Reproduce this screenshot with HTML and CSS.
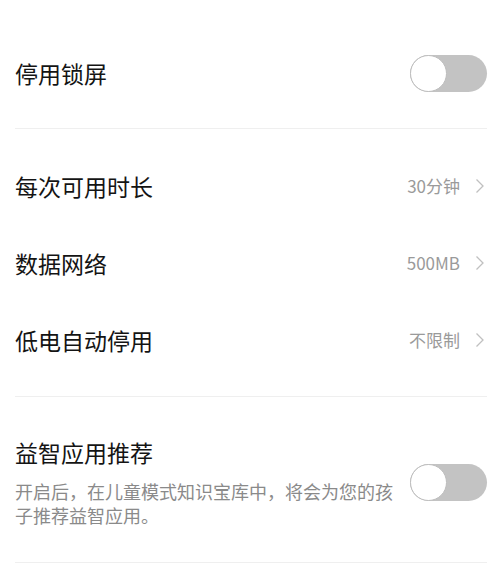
FILE: index.html
```html
<!DOCTYPE html>
<html lang="zh-CN">
<head>
    <meta charset="UTF-8">
    <meta name="viewport" content="width=device-width, initial-scale=1.0">
    <title>儿童模式设置</title>
    <link rel="stylesheet" href="styles.css">
</head>
<body>

    <div class="group group-top">
        <div class="row row-lock">
            <span class="label">停用锁屏</span>
            <div class="switch"><div class="knob"></div></div>
        </div>
    </div>

    <div class="group group-list">
        <div class="row">
            <span class="label">每次可用时长</span>
            <span class="value">30分钟
                <svg class="arrow" width="10" height="16" viewBox="0 0 10 16"><polyline points="1.5,1.5 8,8 1.5,14.5"/></svg>
            </span>
        </div>
        <div class="row">
            <span class="label">数据网络</span>
            <span class="value">500MB
                <svg class="arrow" width="10" height="16" viewBox="0 0 10 16"><polyline points="1.5,1.5 8,8 1.5,14.5"/></svg>
            </span>
        </div>
        <div class="row">
            <span class="label">低电自动停用</span>
            <span class="value">不限制
                <svg class="arrow" width="10" height="16" viewBox="0 0 10 16"><polyline points="1.5,1.5 8,8 1.5,14.5"/></svg>
            </span>
        </div>
    </div>

    <div class="group group-recommend">
        <div class="row row-desc">
            <div class="text">
                <div class="label">益智应用推荐</div>
                <p class="desc">开启后，在儿童模式知识宝库中，将会为您的孩子推荐益智应用。</p>
            </div>
            <div class="switch"><div class="knob"></div></div>
        </div>
    </div>

</body>
</html>
```

FILE: styles.css
```css
body {
    font-family: "Noto Sans CJK SC", "Noto Sans", sans-serif;
    margin: 0;
    padding: 0;
    background-color: #ffffff;
    color: #141414;
}
.group {
    margin: 0 13px 0 15px;
    border-bottom: 1px solid #efefef;
}
.group-top {
    padding-top: 18px;
}
.group-list {
    padding-top: 18px;
    padding-bottom: 18px;
}
.group-recommend {
    padding-top: 40px;
    padding-bottom: 35px;
}
.row {
    display: flex;
    align-items: center;
    justify-content: space-between;
    height: 77px;
}
.row-lock {
    height: 110px;
}
.row-desc {
    height: auto;
}
.label {
    font-size: 23px;
    line-height: 30px;
}
.value {
    display: flex;
    align-items: center;
    gap: 15px;
    font-size: 17px;
    color: #9a9a9a;
    padding-right: 2px;
}
.arrow polyline {
    fill: none;
    stroke: #c0c0c0;
    stroke-width: 1.3;
}
.text {
    width: 380px;
}
.desc {
    margin: 12px 0 0 0;
    font-size: 18px;
    line-height: 24px;
    color: #8a8a8a;
}
.switch {
    width: 77px;
    height: 37px;
    border-radius: 19px;
    background-color: #c3c3c3;
    flex-shrink: 0;
    position: relative;
}
.knob {
    position: absolute;
    left: 0;
    top: 0;
    width: 35px;
    height: 35px;
    border-radius: 50%;
    background-color: #ffffff;
    border: 1px solid #bdbdbd;
}
```
